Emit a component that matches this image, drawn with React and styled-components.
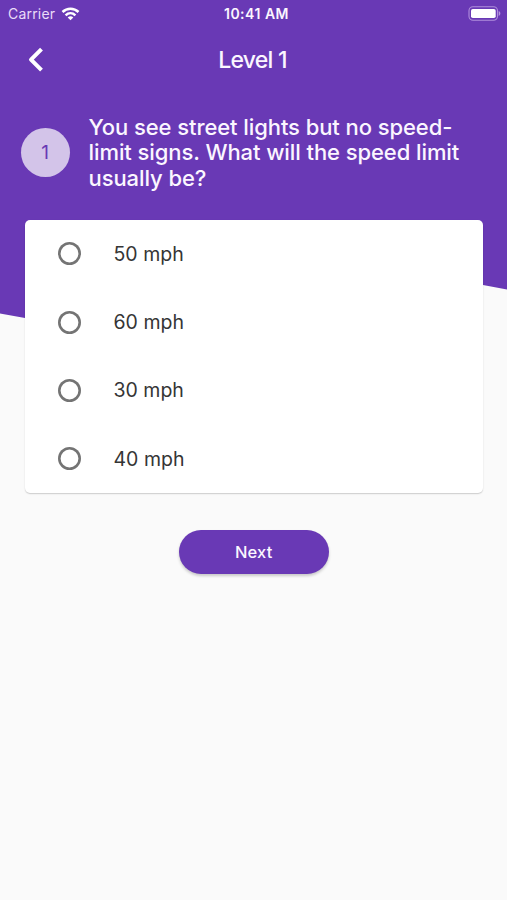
import React, { useState } from "react";
import styled, { createGlobalStyle } from "styled-components";

const PURPLE = "#6939b5";

const GlobalStyle = createGlobalStyle`
  *, *::before, *::after { box-sizing: border-box; }
  body { margin: 0; background: #fafafa; }
`;

const Screen = styled.main`
  width: 507px;
  height: 900px;
  overflow: hidden;
  background: #fafafa;
  font-family: Inter, Roboto, sans-serif;
`;

const Header = styled.header`
  height: 319px;
  background: ${PURPLE};
  color: #fbf6ff;
  clip-path: polygon(0 0, 100% 0, 100% 289.5px, 483px 285px, 25px 318px, 0 313.5px);
`;

const StatusBar = styled.div`
  display: grid;
  grid-template-columns: 1fr auto 1fr;
  align-items: center;
  height: 27px;
  padding: 0 6px 0 8px;
`;

const Carrier = styled.div`
  display: flex;
  align-items: center;
  gap: 6px;
  font-size: 14px;
  line-height: 27px;
  letter-spacing: 0.2px;
  color: #eadcf8;
`;

const Clock = styled.time`
  font-size: 14px;
  font-weight: 600;
  line-height: 27px;
  letter-spacing: 0.5px;
  margin-left: 4px;
`;

const BatterySlot = styled.div`
  display: flex;
  justify-content: flex-end;
`;

const NavBar = styled.nav`
  display: grid;
  grid-template-columns: 1fr auto 1fr;
  align-items: center;
  height: 65px;
  padding: 0 26px;
`;

const BackButton = styled.button`
  display: flex;
  width: 20px;
  height: 28px;
  padding: 0;
  border: 0;
  background: none;
  color: #fff;
`;

const Title = styled.h1`
  margin: 0 2px 0 0;
  font-size: 23px;
  font-weight: 500;
  line-height: 28px;
  letter-spacing: -0.75px;
`;

const Question = styled.section`
  display: flex;
  align-items: center;
  gap: 19px;
  height: 120px;
  padding-left: 20.5px;
`;

const NumberBadge = styled.span`
  display: flex;
  align-items: center;
  justify-content: center;
  width: 49px;
  height: 49px;
  border-radius: 50%;
  background: #d3c4e9;
  color: ${PURPLE};
  font-size: 19px;
`;

const QuestionText = styled.h2`
  width: 390px;
  margin: 2px 0 0;
  font-size: 22px;
  font-weight: 500;
  line-height: 25.6px;
  letter-spacing: -0.08px;
`;

const Line = styled.span`
  display: block;
  white-space: nowrap;
`;

const Card = styled.form`
  width: 457.5px;
  height: 273.5px;
  margin: -99.5px 0 0 25px;
  border-radius: 5px;
  background: #fff;
  position: relative;
  box-shadow: 0 1px 1px rgba(0, 0, 0, 0.12), 0 1px 2px rgba(0, 0, 0, 0.08);
`;

const Option = styled.label`
  display: flex;
  align-items: center;
  gap: 33px;
  height: 68.4px;
  padding-left: 32.5px;
  color: #353535;
  font-size: 19.5px;
  line-height: 24px;
  letter-spacing: 0;
`;

const Radio = styled.input`
  appearance: none;
  width: 23px;
  height: 23px;
  margin: 0;
  border-radius: 50%;
  box-shadow: inset 0 0 0 2.6px #747474;
  &:checked {
    box-shadow: inset 0 0 0 2.6px ${PURPLE};
    background: radial-gradient(${PURPLE} 5px, transparent 6px);
  }
`;

const NextButton = styled.button`
  display: block;
  width: 150.5px;
  height: 44px;
  margin: 36.5px 0 0 178.5px;
  padding: 0;
  border: 0;
  border-radius: 22px;
  background: ${PURPLE};
  color: #fbf6ff;
  font: 500 16.5px/44px Inter, Roboto, sans-serif;
  letter-spacing: 0.2px;
  box-shadow: 0 2px 3px rgba(0, 0, 0, 0.2);
`;

const WifiIcon = () => (
  <svg width="19" height="14" viewBox="0 0 19 14" fill="none" stroke="#fff" strokeWidth="2.5">
    <path d="M1.5 5C6 .7 13 .7 17.5 5" />
    <path d="M4.6 8.3C7.5 5.5 11.5 5.5 14.4 8.3" />
    <path d="M9.5 13.2 6.7 10.4C8.4 8.9 10.6 8.9 12.3 10.4Z" fill="#fff" stroke="none" />
  </svg>
);

const BatteryIcon = () => (
  <svg width="33" height="15" viewBox="0 0 33 15">
    <rect x="1" y=".8" width="28.5" height="13.4" rx="4" fill="none" stroke="#b08edc" strokeWidth="1.1" />
    <rect x="3" y="3" width="24.7" height="9" rx="1.8" fill="#fff" />
    <path d="M30.7 5.1c2.2 .7 2.2 4.1 0 4.8z" fill="#b596df" />
  </svg>
);

const ChevronIcon = () => (
  <svg width="20" height="28" viewBox="0 0 20 28" fill="none" stroke="currentColor" strokeWidth="4" strokeLinejoin="round">
    <path d="M15.5 3.2 5 13.7l10.5 10.5" />
  </svg>
);

const LINES = ["You see street lights but no speed-", "limit signs. What will the speed limit", "usually be?"];
const OPTIONS = ["50 mph", "60 mph", "30 mph", "40 mph"];

export default function App() {
  const [answer, setAnswer] = useState(null);
  return (
    <Screen>
      <GlobalStyle />
      <Header>
        <StatusBar>
          <Carrier>Carrier <WifiIcon /></Carrier>
          <Clock>10:41 AM</Clock>
          <BatterySlot><BatteryIcon /></BatterySlot>
        </StatusBar>
        <NavBar>
          <BackButton type="button" aria-label="Back"><ChevronIcon /></BackButton>
          <Title>Level 1</Title>
        </NavBar>
        <Question>
          <NumberBadge>1</NumberBadge>
          <QuestionText>
            {LINES.map((line) => <Line key={line}>{line}</Line>)}
          </QuestionText>
        </Question>
      </Header>
      <Card>
        {OPTIONS.map((option) => (
          <Option key={option}>
            <Radio
              type="radio"
              name="answer"
              checked={answer === option}
              onChange={() => setAnswer(option)}
            />
            {option}
          </Option>
        ))}
      </Card>
      <NextButton type="button">Next</NextButton>
    </Screen>
  );
}
